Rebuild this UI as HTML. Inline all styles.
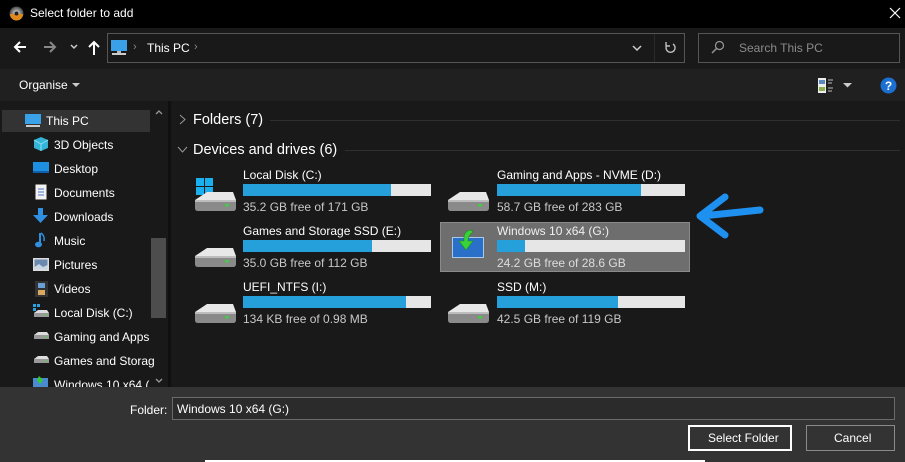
<!DOCTYPE html>
<html><head><meta charset="utf-8"><style>
*{margin:0;padding:0;box-sizing:border-box}
body{width:905px;height:462px;overflow:hidden;background:#191919;font-family:"Liberation Sans",sans-serif;font-size:12px;color:#fff;position:relative}
.a{position:absolute}
.t{position:absolute;white-space:nowrap}
.bar{position:absolute;height:12px;background:#e6e6e6;width:188px}
.bar i{display:block;height:12px;background:#26a0da}
.sub{color:#c8c8c8}
.nav{position:absolute;left:34px;white-space:nowrap;font-size:12px;color:#fff}
</style></head><body>
<div class="a" style="left:0;top:0;width:905px;height:28px;background:#000"></div>
<svg class="a" style="left:9px;top:6px" width="15" height="15"><defs><radialGradient id="g"><stop offset="0" stop-color="#fff"/><stop offset=".5" stop-color="#999"/><stop offset="1" stop-color="#444"/></radialGradient></defs><circle cx="7.5" cy="7.5" r="7" fill="url(#g)"/><path d="M1 8 A6.5 6.5 0 0 0 14 8 Z" fill="#e08a1e"/><circle cx="7.5" cy="7.5" r="2" fill="#222"/></svg>
<div class="t" style="left:30px;top:6px;font-size:12px">Select folder to add</div>
<svg class="a" style="left:889px;top:7px" width="12" height="12"><path d="M1 1L11 11M11 1L1 11" stroke="#fff" stroke-width="1.2"/></svg>
<svg class="a" style="left:13px;top:41px" width="14" height="12"><path d="M13 6H2M7 1L2 6L7 11" stroke="#fff" stroke-width="2" fill="none"/></svg>
<svg class="a" style="left:43px;top:41px" width="14" height="12"><path d="M1 6H12M7 1L12 6L7 11" stroke="#888" stroke-width="2" fill="none"/></svg>
<svg class="a" style="left:70px;top:44px" width="8" height="6"><path d="M1 1L4 4L7 1" stroke="#ccc" stroke-width="1.5" fill="none"/></svg>
<svg class="a" style="left:88px;top:40px" width="12" height="15"><path d="M6 15V2M1 7L6 2L11 7" stroke="#fff" stroke-width="2" fill="none"/></svg>
<div class="a" style="left:107px;top:33px;width:578px;height:30px;border:1px solid #555"></div>
<svg class="a" style="left:110px;top:39px" width="18" height="18"><rect x="1" y="1" width="16" height="11" fill="#3aa0e8"/><rect x="7" y="12" width="4" height="2" fill="#bbb"/><rect x="2" y="14" width="14" height="2" fill="#ccc"/></svg>
<div class="t" style="left:133px;top:41px;color:#888;font-size:11px">›</div>
<div class="t" style="left:147px;top:41px">This PC</div>
<div class="t" style="left:194px;top:41px;color:#888;font-size:11px">›</div>
<svg class="a" style="left:632px;top:45px" width="10" height="6"><path d="M1 1L5 5L9 1" stroke="#ccc" stroke-width="1.5" fill="none"/></svg>
<div class="a" style="left:654px;top:34px;width:1px;height:28px;background:#2a2a2a"></div>
<svg class="a" style="left:664px;top:41px" width="12" height="13"><path d="M9 3A4.5 4.5 0 1 1 3 4" stroke="#bbb" stroke-width="1.4" fill="none"/><path d="M2 1V5H6" stroke="#bbb" stroke-width="1.4" fill="none"/></svg>
<div class="a" style="left:698px;top:33px;width:202px;height:30px;border:1px solid #555"></div>
<svg class="a" style="left:711px;top:40px" width="14" height="14"><circle cx="8.5" cy="5.5" r="4" stroke="#999" fill="none" stroke-width="1.2"/><path d="M5.5 8.5L1 13" stroke="#999" stroke-width="1.4"/></svg>
<div class="t" style="left:739px;top:41px;color:#8a8a8a">Search This PC</div>
<div class="a" style="left:0;top:69px;width:905px;height:32px;background:#202020"></div>
<div class="t" style="left:19px;top:78px">Organise</div>
<svg class="a" style="left:72px;top:83px" width="8" height="5"><path d="M0 0H8L4 4Z" fill="#ccc"/></svg>
<svg class="a" style="left:817px;top:77px" width="18" height="17"><rect x="1" y="1" width="8" height="15" fill="#eee"/><rect x="2" y="3" width="6" height="4" fill="#5a8ac0"/><rect x="2" y="10" width="6" height="4" fill="#8cb050"/><path d="M11 3h5M11 6h4M11 11h5M11 14h4" stroke="#bbb"/></svg>
<svg class="a" style="left:843px;top:83px" width="9" height="5"><path d="M0 0H9L4.5 4.5Z" fill="#ccc"/></svg>
<svg class="a" style="left:880px;top:77px" width="17" height="17"><circle cx="8.5" cy="8.5" r="8" fill="#1a6fd0"/><text x="8.5" y="13" font-size="12" font-weight="bold" fill="#fff" text-anchor="middle" font-family="Liberation Sans">?</text></svg>
<div class="a" style="left:0;top:101px;width:168px;height:286px;background:#191919"></div>
<div class="a" style="left:168px;top:101px;width:3px;height:286px;background:#101010"></div>
<div class="a" style="left:2px;top:110px;width:148px;height:22px;background:#333"></div>
<div class="a" style="left:151px;top:238px;width:15px;height:80px;background:#4d4d4d"></div>
<svg class="a" style="left:155px;top:110px" width="8" height="5"><path d="M1 4L4 1L7 4" stroke="#999" fill="none" stroke-width="1.3"/></svg>
<svg class="a" style="left:155px;top:378px" width="8" height="5"><path d="M1 1L4 4L7 1" stroke="#999" fill="none" stroke-width="1.3"/></svg>
<svg class="a" style="left:24px;top:113px" width="18" height="16"><rect x="1" y="1" width="16" height="10" fill="#3aa0e8"/><rect x="2" y="12" width="14" height="2" fill="#ccc"/></svg>
<div class="nav" style="left:46px;top:114px">This PC</div>
<svg class="a" style="left:33px;top:136px" width="16" height="16"><path d="M8 1L15 4V12L8 15L1 12V4Z" fill="#34b5d8"/><path d="M8 8L15 4M8 8L1 4M8 8V15" stroke="#8ee0f5" fill="none"/></svg>
<div class="nav" style="left:54px;top:138px">3D Objects</div>
<svg class="a" style="left:33px;top:161px" width="16" height="14"><rect x="0" y="1" width="16" height="11" fill="#1e8fe0"/><rect x="0" y="10" width="16" height="2" fill="#0e5fb0"/></svg>
<div class="nav" style="left:54px;top:162px">Desktop</div>
<svg class="a" style="left:35px;top:184px" width="12" height="16"><rect x="0.5" y="0.5" width="11" height="15" fill="#f2f2f2"/><path d="M3 5h6M3 8h6M3 11h6" stroke="#4a7ac8"/></svg>
<div class="nav" style="left:54px;top:186px">Documents</div>
<svg class="a" style="left:33px;top:208px" width="15" height="16"><path d="M5 0H10V7H15L7.5 15L0 7H5Z" fill="#2f8fe0"/></svg>
<div class="nav" style="left:54px;top:210px">Downloads</div>
<svg class="a" style="left:35px;top:232px" width="12" height="16"><path d="M5 1V12" stroke="#2f8fe0" stroke-width="2"/><ellipse cx="3.5" cy="12.5" rx="3.5" ry="2.8" fill="#2f8fe0"/><path d="M6 1Q10 4 9 9" stroke="#2f8fe0" stroke-width="1.5" fill="none"/></svg>
<div class="nav" style="left:54px;top:234px">Music</div>
<svg class="a" style="left:33px;top:258px" width="16" height="13"><rect x="0" y="0" width="16" height="13" fill="#ddd"/><rect x="1.5" y="1.5" width="13" height="10" fill="#6a8ab0"/><path d="M1.5 9L6 6L10 9L14.5 7V11.5H1.5Z" fill="#c9d6e4"/></svg>
<div class="nav" style="left:54px;top:258px">Pictures</div>
<svg class="a" style="left:35px;top:281px" width="13" height="16"><rect x="0" y="0" width="13" height="16" fill="#333"/><rect x="3" y="2" width="7" height="5" fill="#6aa0d8"/><rect x="3" y="9" width="7" height="5" fill="#d8a860"/></svg>
<div class="nav" style="left:54px;top:282px">Videos</div>
<svg class="a" style="left:32px;top:304px" width="18" height="14"><rect x="1" y="0" width="3" height="3" fill="#29a0e0"/><rect x="5" y="0" width="3" height="3" fill="#29a0e0"/><rect x="1" y="4" width="3" height="3" fill="#29a0e0"/><path d="M2 9L6 6H15L17 9Z" fill="#ddd"/><rect x="2" y="9" width="15" height="4" fill="#999"/><rect x="13" y="10" width="2" height="1.5" fill="#5c5"/></svg>
<div class="nav" style="left:54px;top:306px">Local Disk (C:)</div>
<svg class="a" style="left:32px;top:330px" width="18" height="12"><path d="M2 5L6 2H15L17 5Z" fill="#ddd"/><rect x="2" y="5" width="15" height="4" fill="#999"/><rect x="13" y="6" width="2" height="1.5" fill="#5c5"/></svg>
<div class="nav" style="left:54px;top:330px">Gaming and Apps</div>
<svg class="a" style="left:32px;top:354px" width="18" height="12"><path d="M2 5L6 2H15L17 5Z" fill="#ddd"/><rect x="2" y="5" width="15" height="4" fill="#999"/><rect x="13" y="6" width="2" height="1.5" fill="#5c5"/></svg>
<div class="nav" style="left:54px;top:354px">Games and Storag</div>
<svg class="a" style="left:33px;top:376px" width="16" height="11"><rect x="0" y="2" width="15" height="9" fill="#4a8ad0"/><path d="M6 0L10 4L7 8L4 4Z" fill="#3c3"/></svg>
<div class="nav" style="left:54px;top:378px;width:96px;overflow:hidden;height:9px">Windows 10 x64 (G:)</div>
<svg class="a" style="left:179px;top:114px" width="7" height="11"><path d="M1 1L6 5.5L1 10" stroke="#999" fill="none"/></svg>
<div class="t" style="left:193px;top:112px;font-size:14.5px">Folders (7)</div>
<div class="a" style="left:270px;top:120px;width:630px;height:1px;background:#2f2f2f"></div>
<svg class="a" style="left:177px;top:146px" width="11" height="7"><path d="M1 1L5.5 6L10 1" stroke="#999" fill="none"/></svg>
<div class="t" style="left:193px;top:142px;font-size:14.5px">Devices and drives (6)</div>
<div class="a" style="left:345px;top:150px;width:555px;height:1px;background:#2f2f2f"></div>
<div class="a" style="left:440px;top:222px;width:250px;height:50px;background:#6e6e6e;border:1px solid #8a8a8a"></div>
<svg width="0" height="0" style="position:absolute"><defs><symbol id="drv" viewBox="0 0 44 24"><path d="M2 10L14 2H40L43 10Z" fill="#e8e8e8"/><path d="M2 10H43V18Q43 21 40 21H5Q2 21 2 18Z" fill="#8a8a8a"/><path d="M2 10H43V12H2Z" fill="#bdbdbd"/><rect x="32" y="14" width="4" height="2.5" fill="#4c4"/></symbol></defs></svg>
<svg class="a" style="left:196px;top:178px" width="17" height="17"><rect x="0" y="0" width="8" height="8" fill="#1ab0f0"/><rect x="9" y="0" width="8" height="8" fill="#1ab0f0"/><rect x="0" y="9" width="8" height="8" fill="#1ab0f0"/><rect x="9" y="9" width="8" height="8" fill="#1ab0f0"/></svg>
<svg class="a" style="left:193px;top:190px" width="44" height="24"><use href="#drv"/></svg>
<div class="t" style="left:243px;top:168px">Local Disk (C:)</div>
<div class="bar" style="left:243px;top:184px"><i style="width:148px"></i></div>
<div class="t sub" style="left:243px;top:200px">35.2 GB free of 171 GB</div>
<svg class="a" style="left:446px;top:190px" width="44" height="24"><use href="#drv"/></svg>
<div class="t" style="left:497px;top:168px">Gaming and Apps - NVME (D:)</div>
<div class="bar" style="left:497px;top:184px"><i style="width:144px"></i></div>
<div class="t sub" style="left:497px;top:200px">58.7 GB free of 283 GB</div>
<svg class="a" style="left:193px;top:246px" width="44" height="24"><use href="#drv"/></svg>
<div class="t" style="left:243px;top:224px">Games and Storage SSD (E:)</div>
<div class="bar" style="left:243px;top:240px"><i style="width:129px"></i></div>
<div class="t sub" style="left:243px;top:256px">35.0 GB free of 112 GB</div>
<svg class="a" style="left:451px;top:228px" width="36" height="32"><rect x="1" y="9" width="32" height="21" fill="#aac8e8"/><rect x="2" y="10" width="30" height="19" fill="#2a70c8"/><path d="M20 2Q12 3 13 13H8L15 22L22 13H17Q17 7 22 4Z" fill="#3ad23a" stroke="#1a8a1a" stroke-width=".6"/></svg>
<div class="t" style="left:497px;top:224px;color:#f0f0f0">Windows 10 x64 (G:)</div>
<div class="bar" style="left:497px;top:240px"><i style="width:28px"></i></div>
<div class="t" style="left:497px;top:256px;color:#ddd">24.2 GB free of 28.6 GB</div>
<svg class="a" style="left:193px;top:302px" width="44" height="24"><use href="#drv"/></svg>
<div class="t" style="left:243px;top:280px">UEFI_NTFS (I:)</div>
<div class="bar" style="left:243px;top:296px"><i style="width:163px"></i></div>
<div class="t sub" style="left:243px;top:312px">134 KB free of 0.98 MB</div>
<svg class="a" style="left:446px;top:302px" width="44" height="24"><use href="#drv"/></svg>
<div class="t" style="left:497px;top:280px">SSD (M:)</div>
<div class="bar" style="left:497px;top:296px"><i style="width:121px"></i></div>
<div class="t sub" style="left:497px;top:312px">42.5 GB free of 119 GB</div>
<svg class="a" style="left:692px;top:192px" width="72" height="48"><path d="M33 5L8 24L33 43M10 24L68 18" stroke="#1e90f0" stroke-width="7" fill="none" stroke-linecap="round" stroke-linejoin="round"/></svg>
<div class="a" style="left:0;top:387px;width:905px;height:75px;background:#333"></div>
<div class="t" style="left:130px;top:403px">Folder:</div>
<div class="a" style="left:172px;top:397px;width:723px;height:23px;border:1px solid #6a6a6a;background:#2b2b2b"></div>
<div class="t" style="left:177px;top:402px">Windows 10 x64 (G:)</div>
<div class="a" style="left:688px;top:425px;width:104px;height:26px;border:2px solid #fff;background:#333"></div>
<div class="t" style="left:708px;top:431px">Select Folder</div>
<div class="a" style="left:806px;top:425px;width:89px;height:26px;border:1px solid #8a8a8a;background:#333"></div>
<div class="t" style="left:834px;top:431px">Cancel</div>
<div class="a" style="left:205px;top:460px;width:500px;height:2px;background:#fff"></div>
</body></html>
